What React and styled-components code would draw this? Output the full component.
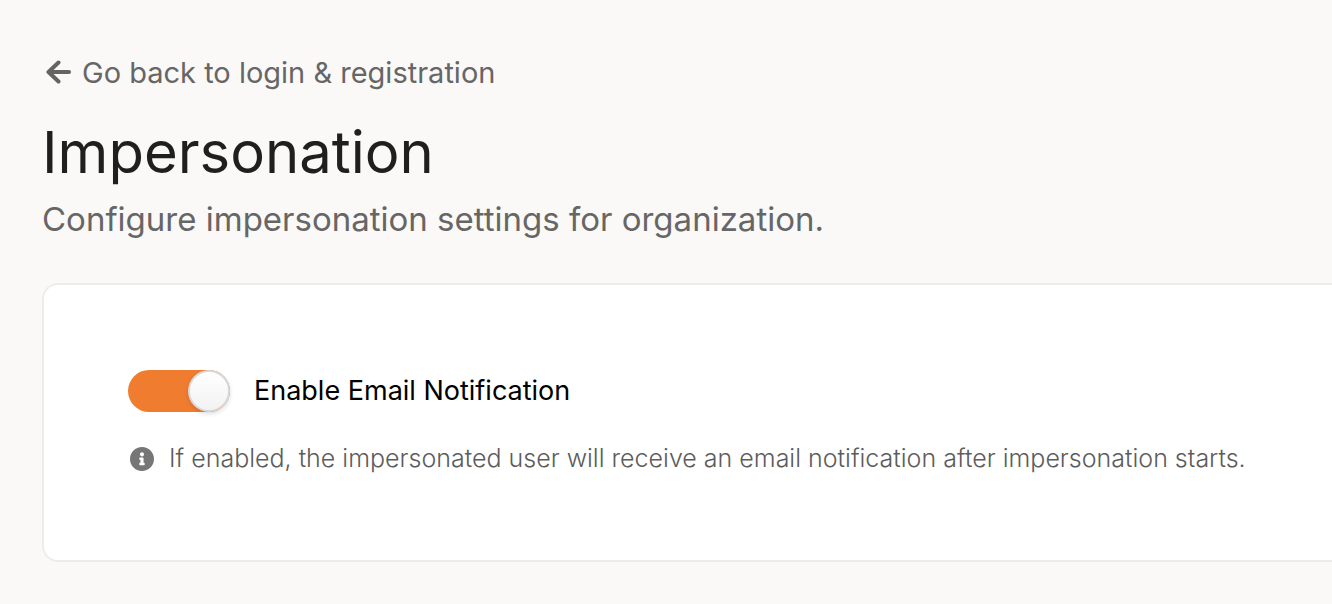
import React from "react";
import styled, { createGlobalStyle } from "styled-components";

const Global = createGlobalStyle`
  *, *::before, *::after { box-sizing: border-box; }
  body {
    margin: 0;
    background: #faf9f8;
    font-family: Inter, "Open Sans", sans-serif;
    font-weight: 400;
    overflow-x: hidden;
  }
`;
const Page = styled.main`
  padding: 57px 0 42px 42px;
`;
const BackLink = styled.a`
  display: flex;
  width: fit-content;
  align-items: center;
  gap: 10px;
  margin-left: 4px;
  color: #666;
  font-size: 29px;
  line-height: 32px;
  text-decoration: none;
`;
const Title = styled.h1`
  margin: 27px 0 0;
  color: #1f1f1f;
  font-size: 58px;
  font-weight: 400;
  line-height: 72px;
`;
const Subtitle = styled.p`
  margin: 11px 0 0;
  color: #666;
  font-size: 33px;
  line-height: 40px;
`;
const Card = styled.section`
  margin-top: 44px;
  padding: 85px 84px;
  background: #fff;
  border: 2px solid #ececec;
  border-right: 0;
  border-radius: 16px 0 0 16px;
`;
const ToggleLabel = styled.label`
  display: flex;
  width: fit-content;
  align-items: center;
  gap: 24px;
  color: #000;
  font-size: 27px;
  line-height: 42px;
`;
const Switch = styled.input`
  appearance: none;
  width: 102px;
  height: 42px;
  margin: 0;
  border-radius: 21px;
  background: ${({ checked }) => (checked ? "#f07c30" : "#d5d5d5")};
  display: flex;
  justify-content: ${({ checked }) => (checked ? "flex-end" : "flex-start")};
  &::before {
    content: "";
    width: 42px;
    height: 42px;
    border: 2px solid #d9d9da;
    border-radius: 50%;
    background: linear-gradient(#fff, #f2f2f2);
    box-shadow: 0 2px 4px rgba(34, 36, 38, 0.15);
  }
`;
const Hint = styled.p`
  display: flex;
  align-items: center;
  gap: 15px;
  margin: 30px 0 0;
  padding-left: 2px;
  color: #5c5c5c;
  font-size: 25px;
  font-weight: 300;
  line-height: 33px;
  white-space: nowrap;
`;

export default function App() {
  const [enabled, setEnabled] = React.useState(true);
  return (
    <Page>
      <Global />
      <BackLink href="#login">
        <svg width="26" height="26" viewBox="0 0 26 26" fill="none" stroke="#646464" strokeWidth="4" strokeLinecap="round" strokeLinejoin="round" aria-hidden="true">
          <path d="M12.500 2.500L2.500 12L12.500 21.500M3 12H23" />
        </svg>
        Go back to login &amp; registration
      </BackLink>
      <Title>Impersonation</Title>
      <Subtitle>Configure impersonation settings for organization.</Subtitle>
      <Card>
        <ToggleLabel>
          <Switch type="checkbox" role="switch" checked={enabled} onChange={(e) => setEnabled(e.target.checked)} />
          Enable Email Notification
        </ToggleLabel>
        <Hint>
          <svg width="24" height="24" viewBox="8 8 496 496" fill="#767676" aria-hidden="true">
            <path d="M256 8C119 8 8 119 8 256s111 248 248 248 248-111 248-248S393 8 256 8zm0 110c23.200 0 42 18.800 42 42s-18.800 42-42 42-42-18.800-42-42 18.800-42 42-42zm56 254c0 6.600-5.400 12-12 12h-88c-6.600 0-12-5.400-12-12v-24c0-6.600 5.400-12 12-12h12v-64h-12c-6.600 0-12-5.400-12-12v-24c0-6.600 5.400-12 12-12h64c6.600 0 12 5.400 12 12v100h12c6.600 0 12 5.400 12 12v24z" />
          </svg>
          If enabled, the impersonated user will receive an email notification after impersonation starts.
        </Hint>
      </Card>
    </Page>
  );
}
